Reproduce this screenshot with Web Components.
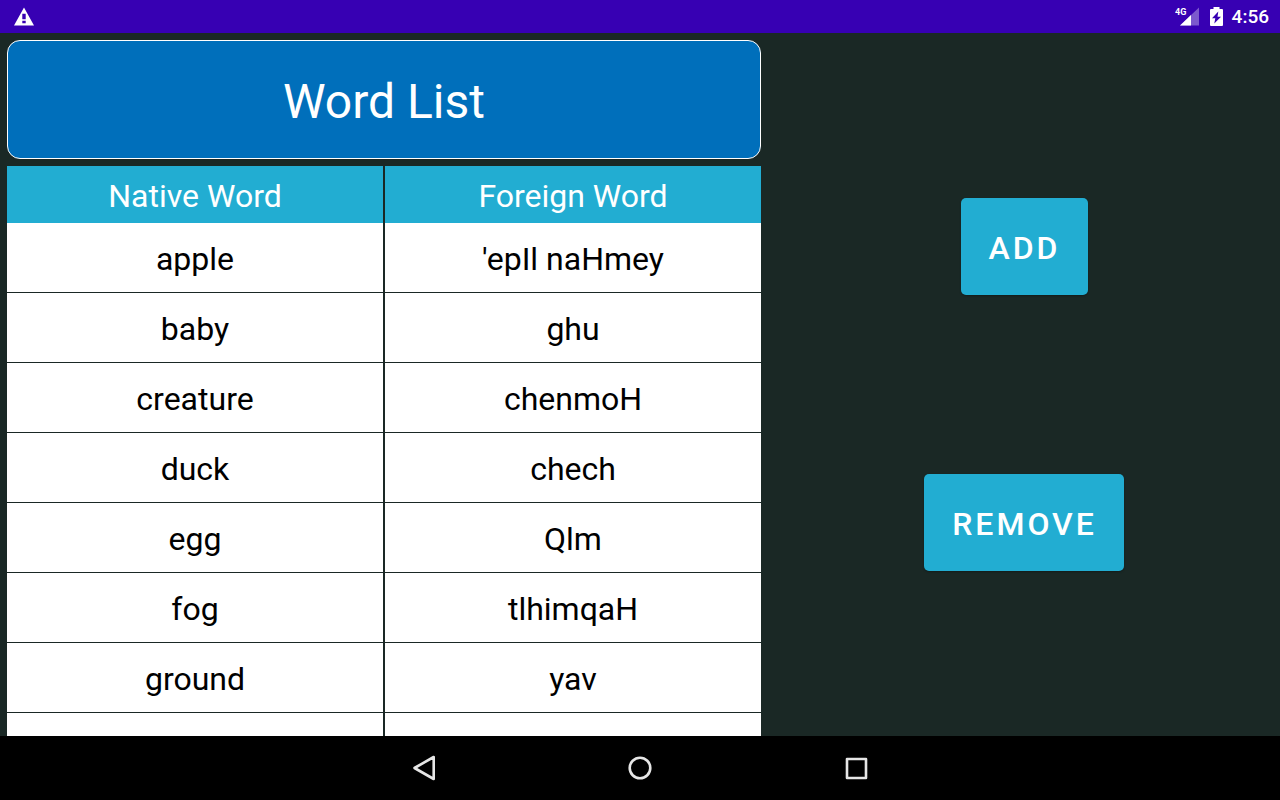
<!DOCTYPE html>
<html lang="en">
<head>
<meta charset="utf-8">
<title>Word List</title>
<style>
  html, body { height: 100%; margin: 0; }
  body { font-family: Roboto, sans-serif; background: #1a2825; }
</style>
</head>
<body>
<word-app>
  <status-bar slot="status" time="4:56"></status-bar>
  <page-title slot="list">Word List</page-title>
  <word-table slot="list"></word-table>
  <action-button slot="actions">ADD</action-button>
  <action-button slot="actions">REMOVE</action-button>
  <nav-bar slot="nav"></nav-bar>
</word-app>

<script>
  const define = (name, html, setup) => {
    const template = document.createElement('template');
    template.innerHTML = html;
    customElements.define(name, class extends HTMLElement {
      constructor() {
        super();
        this.attachShadow({ mode: 'open' }).append(template.content.cloneNode(true));
      }
      connectedCallback() {
        if (setup) setup(this, this.shadowRoot);
      }
    });
  };

  define('word-app', `
    <style>
      :host { display: flex; flex-direction: column; height: 100vh; overflow: hidden; }
      main { flex: 1; min-height: 0; display: grid; grid-template-columns: 3fr 2fr; }
      .list { display: flex; flex-direction: column; gap: 7px; padding: 7px 7px 0; min-height: 0; overflow: hidden; }
      .actions { display: flex; flex-direction: column; align-items: center; justify-content: space-evenly; }
    </style>
    <slot name="status"></slot>
    <main>
      <section class="list"><slot name="list"></slot></section>
      <section class="actions"><slot name="actions"></slot></section>
    </main>
    <slot name="nav"></slot>`);

  define('status-bar', `
    <style>
      :host { display: flex; align-items: center; justify-content: space-between; flex: none;
              box-sizing: border-box; height: 33px; padding: 0 11px 0 13px; background: #3700b3; color: #fff; }
      .right { display: flex; align-items: center; gap: 9px; }
      .icons { display: flex; align-items: center; gap: 11px; }
      svg { display: block; }
      .signal text { font: 700 9px Roboto, sans-serif; }
      time { font-size: 19px; line-height: 33px; font-weight: 500; }
    </style>
    <svg width="22" height="20" viewBox="0 0 22 20" aria-label="Warning" role="img">
      <path fill="#fff" fill-rule="evenodd" d="M11 .500 21 18.500H1ZM9.300 6.800V12.300h3.400V6.800ZM9.300 13.800v2.500h3.400v-2.500Z"/>
    </svg>
    <div class="right">
      <div class="icons">
        <svg class="signal" width="24" height="20" viewBox="0 0 24 20">
          <path fill="#fff" fill-opacity=".35" d="M24 .500v18H5Z"/>
          <path fill="#fff" d="M16 8v10.500H5Z"/>
          <path fill="#3700b3" d="M0 0h13v9H0z"/>
          <text x="0" y="8" fill="#fff">4G</text>
        </svg>
        <svg width="13" height="20" viewBox="0 0 13 20">
          <path fill="#fff" fill-rule="evenodd" d="M3.500 0h6v2H12q1 0 1 1v15q0 1-1 1H1q-1 0-1-1V3q0-1 1-1H3.500ZM8.300 4.500 2 11.300H5.300L4.300 16.500 11 9.700H7.500Z"/>
        </svg>
      </div>
      <time></time>
    </div>`,
    (host, root) => { root.querySelector('time').textContent = host.getAttribute('time'); });

  define('page-title', `
    <style>
      :host { display: block; flex: none; box-sizing: border-box; padding: 32px 16px 28px; text-align: center;
              background: #006fbb; border: 1px solid #fff; border-radius: 13px; color: #fff; }
      h1 { margin: 0; font-size: 48px; line-height: 57px; font-weight: 400; }
    </style>
    <h1><slot></slot></h1>`);

  define('word-table', `
    <style>
      :host { display: block; flex: none; }
      table { width: 100%; table-layout: fixed; border-spacing: 0; font-size: 32px; text-align: center; }
      th, td { box-sizing: border-box; padding: 4px 0 0; }
      th { height: 57px; line-height: 53px; font-weight: 400; background: #22add2; color: #fff; }
      td { height: 70px; line-height: 65px; background: #fff; color: #000; border-bottom: 1px solid #1a2825; }
      :is(th, td):first-child { border-right: 1px solid #1a2825; }
      :is(th, td):last-child { border-left: 1px solid #1a2825; }
    </style>
    <table>
      <thead><tr><th scope="col">Native Word</th><th scope="col">Foreign Word</th></tr></thead>
      <tbody></tbody>
    </table>`,
    (host, root) => {
      const words = [
        ['apple', "'epIl naHmey"],
        ['baby', 'ghu'],
        ['creature', 'chenmoH'],
        ['duck', 'chech'],
        ['egg', 'Qlm'],
        ['fog', 'tlhimqaH'],
        ['ground', 'yav'],
        ['', ''],
      ];
      const body = root.querySelector('tbody');
      body.replaceChildren();
      for (const pair of words) {
        const row = body.insertRow();
        for (const word of pair) row.insertCell().textContent = word;
      }
    });

  define('action-button', `
    <style>
      :host { display: block; margin: 14px 0; }
      button { display: block; height: 97px; padding: 2px 27px 0 28px; border: 0; border-radius: 5px; background: #22add2;
               color: #fff; font: 500 32px/38px Roboto, sans-serif; letter-spacing: 3px;
               box-shadow: 0 1px 2px rgba(0, 0, 0, .3); }
    </style>
    <button type="button"><slot></slot></button>`);

  define('nav-bar', `
    <style>
      :host { display: block; flex: none; background: #000; }
      nav { display: flex; justify-content: center; gap: 152px; }
      button { display: grid; place-items: center; width: 64px; height: 64px; padding: 0; border: 0; background: none; }
      svg { display: block; fill: none; stroke: #e6e6e6; stroke-width: 2.600; stroke-linejoin: round; }
    </style>
    <nav>
      <button type="button" aria-label="Back"><svg width="32" height="32" viewBox="0 0 32 32"><path d="M25.700 5v22L6.500 16Z"/></svg></button>
      <button type="button" aria-label="Home"><svg width="32" height="32" viewBox="0 0 32 32"><circle cx="16" cy="16" r="10.300"/></svg></button>
      <button type="button" aria-label="Overview"><svg width="32" height="32" viewBox="0 0 32 32"><path d="M7 7h19v19H7Z"/></svg></button>
    </nav>`);
</script>
</body>
</html>
